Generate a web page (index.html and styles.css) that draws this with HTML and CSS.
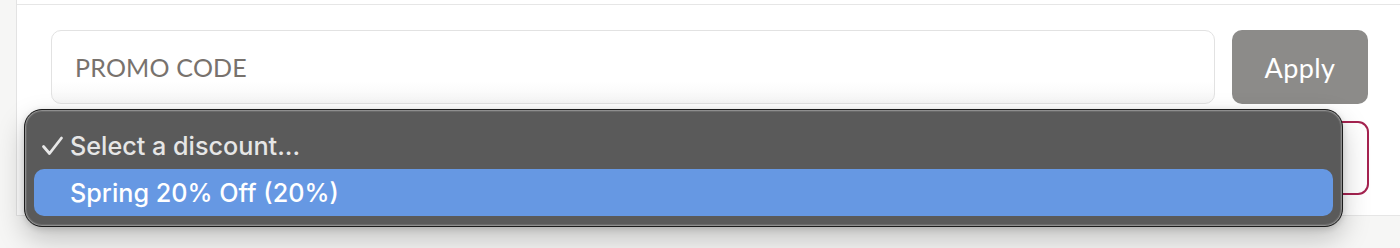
FILE: index.html
```html
<!DOCTYPE html>
<html>
<head>
<meta charset="utf-8">
<link rel="stylesheet" href="styles.css">
</head>
<body>
<div class="card">
  <div class="topline"></div>
  <div class="content">
    <div class="promo-row">
      <div class="promo-input">PROMO CODE</div>
      <button class="apply">Apply</button>
    </div>
    <div class="select"></div>
  </div>
</div>
<div class="menu">
  <div class="item checked">
    <svg class="check" width="24" height="20" viewBox="0 0 24 20"><path d="M2.5 10.5 L8.5 17.5 L20.5 2" fill="none" stroke="#e8e8e8" stroke-width="2.8" stroke-linecap="round" stroke-linejoin="round"/></svg>
    <span>Select a discount...</span>
  </div>
  <div class="item selected"><span>Spring 20% Off (20%)</span></div>
</div>
</body>
</html>
```
FILE: styles.css
```css
html, body {
  margin: 0;
  padding: 0;
}
body {
  width: 1400px;
  height: 248px;
  overflow: hidden;
  background: #f6f6f5;
  position: relative;
  font-family: "Lato", "Liberation Sans", sans-serif;
}
.card {
  margin-left: 16px;
  border-left: 1px solid #e3e3e3;
  background: #ffffff;
  height: 215px;
  border-bottom: 1px solid #e6e6e6;
}
.topline {
  height: 4px;
  border-bottom: 1px solid #e6e6e6;
}
.content {
  padding: 25px 32px 0 34px;
  display: flex;
  flex-direction: column;
  gap: 17px;
}
.promo-row {
  display: flex;
  gap: 17px;
}
.promo-input {
  flex: 1;
  border: 1px solid #e2e2e2;
  border-radius: 10px;
  box-sizing: border-box;
  height: 74px;
  display: flex;
  align-items: center;
  padding-left: 23px;
  font-size: 25px;
  color: #78726d;
  letter-spacing: 0.2px;
  background: linear-gradient(#ffffff 70%, #f6f6f6);
}
.apply {
  width: 136px;
  height: 74px;
  border: none;
  border-radius: 10px;
  background: #8c8b89;
  color: #ffffff;
  font-family: "Lato", "Liberation Sans", sans-serif;
  font-size: 27px;
  padding: 0;
  letter-spacing: 0.4px;
}
.select {
  height: 74px;
  margin-right: -1px;
  box-sizing: border-box;
  border: 2px solid #a52350;
  border-radius: 11px;
}
.menu {
  position: absolute;
  left: 24px;
  top: 109px;
  width: 1319px;
  height: 118px;
  box-sizing: border-box;
  border: 1px solid #1c1c1c;
  border-radius: 18px;
  background: #5a5a5a;
  box-shadow: inset 0 0 0 1px #8e8e8e, inset 0 0 0 2px #6a6a6a, 0 12px 28px rgba(0,0,0,0.22), 0 2px 6px rgba(0,0,0,0.15);
  padding: 10px 9px 10px 9px;
  display: flex;
  flex-direction: column;
  font-family: "Inter", "Noto Sans", sans-serif;
  font-size: 25.2px;
  font-weight: 500;
}
.item {
  display: flex;
  align-items: center;
  border-radius: 10px;
  padding-left: 36px;
  position: relative;
}
.item.checked {
  height: 48px;
  color: #e6e6e6;
  padding-top: 2px;
}
.item.selected {
  height: 48px;
  background: #6698e3;
  color: #ffffff;
}
.check {
  position: absolute;
  left: 7px;
  top: 16px;
}
```
